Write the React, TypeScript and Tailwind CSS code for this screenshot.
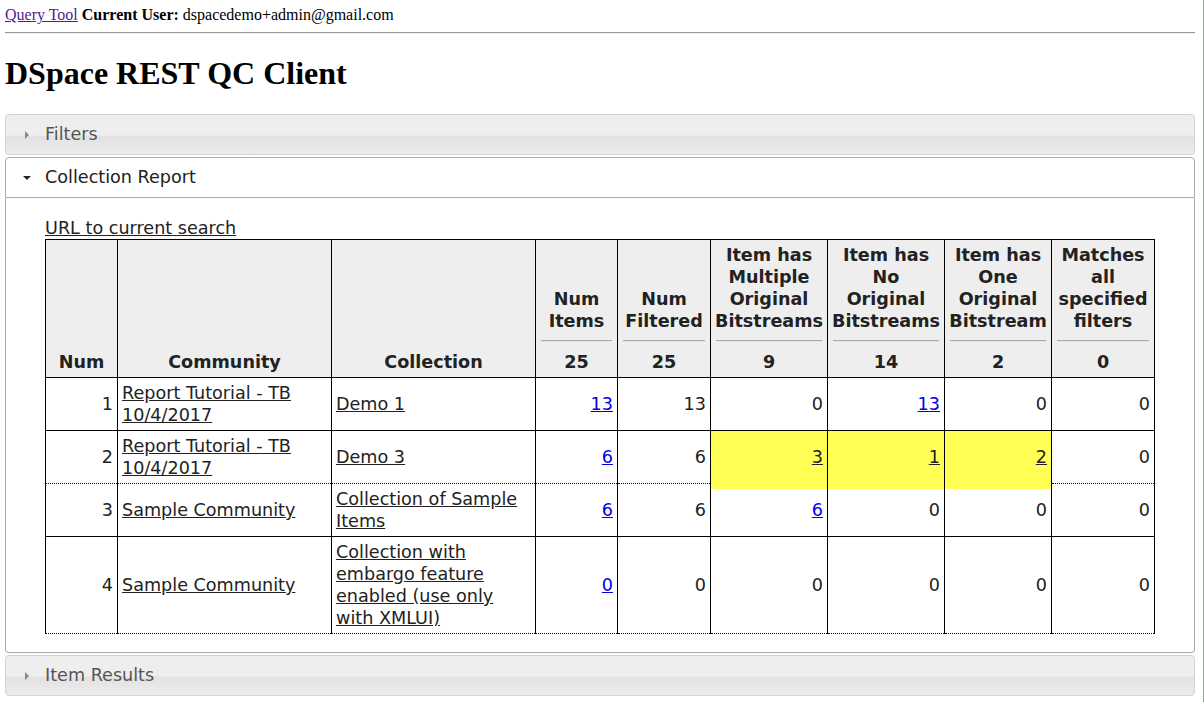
import React from "react";

const ui = { fontFamily: '"DejaVu Sans", Verdana, sans-serif' };

function TriRight() {
  return (
    <svg width="16" height="16" viewBox="0 0 16 16" className="shrink-0">
      <path d="M6 4 L10 8 L6 12 Z" fill="#888888" />
    </svg>
  );
}

function TriDown() {
  return (
    <svg width="16" height="16" viewBox="0 0 16 16" className="shrink-0">
      <path d="M4 6 L12 6 L8 10 Z" fill="#222222" />
    </svg>
  );
}

function ClosedHeader({ label }: { label: string }) {
  return (
    <div className="mt-[2px] flex items-center rounded-[4px] border border-[#d3d3d3] bg-[linear-gradient(to_bottom,#eeeeee_0%,#eeeeee_50%,#e2e2e2_56%,#ececec_100%)] py-[8px] pl-[13px] text-[17.6px] leading-[23px] text-[#555555]">
      <TriRight />
      <span className="ml-[10px]">{label}</span>
    </div>
  );
}

const blue = "text-[#0000ee] underline";
const dark = "text-[#222222] underline";

type Cell = { v: string; link?: boolean; hi?: boolean };

const rows: { num: number; comm: string; coll: string; cells: Cell[]; dotted?: boolean }[] = [
  {
    num: 1,
    comm: "Report Tutorial - TB 10/4/2017",
    coll: "Demo 1",
    cells: [{ v: "13", link: true }, { v: "13" }, { v: "0" }, { v: "13", link: true }, { v: "0" }, { v: "0" }],
  },
  {
    num: 2,
    comm: "Report Tutorial - TB 10/4/2017",
    coll: "Demo 3",
    dotted: true,
    cells: [
      { v: "6", link: true },
      { v: "6" },
      { v: "3", link: true, hi: true },
      { v: "1", link: true, hi: true },
      { v: "2", link: true, hi: true },
      { v: "0" },
    ],
  },
  {
    num: 3,
    comm: "Sample Community",
    coll: "Collection of Sample Items",
    cells: [{ v: "6", link: true }, { v: "6" }, { v: "6", link: true }, { v: "0" }, { v: "0" }, { v: "0" }],
  },
  {
    num: 4,
    comm: "Sample Community",
    coll: "Collection with embargo feature enabled (use only with XMLUI)",
    dotted: true,
    cells: [{ v: "0", link: true }, { v: "0" }, { v: "0" }, { v: "0" }, { v: "0" }, { v: "0" }],
  },
];

const countCols: { label: string[]; total: string }[] = [
  { label: ["Num", "Items"], total: "25" },
  { label: ["Num", "Filtered"], total: "25" },
  { label: ["Item has", "Multiple", "Original", "Bitstreams"], total: "9" },
  { label: ["Item has", "No", "Original", "Bitstreams"], total: "14" },
  { label: ["Item has", "One", "Original", "Bitstream"], total: "2" },
  { label: ["Matches", "all", "specified", "filters"], total: "0" },
];

const th = "border border-black bg-[#eeeeee] px-[4px] pt-[4px] pb-[4px] align-bottom font-bold text-center";
const td = "border-x border-black px-[4px] py-[4px] align-middle";

export default function App() {
  return (
    <div className="flex h-[702px] w-[1204px] overflow-hidden border-r border-[#9ea1a8] bg-white">
      <div className="flex-1 pl-[5px] pr-[9px] pt-[6px]">
        <div className="text-[16px] leading-[18px] text-black" style={{ fontFamily: '"Liberation Serif", "Times New Roman", serif' }}>
          <a className="text-[#551a8b] underline">Query Tool</a> <b>Current User:</b> dspacedemo+admin@gmail.com
          <div className="mt-[8px] border-t border-b border-t-[#9a9a9a] border-b-[#eeeeee]" />
          <h1 className="mt-[21px] mb-[22px] text-[32px] font-bold leading-[37px]">DSpace REST QC Client</h1>
        </div>

        <div style={ui}>
          <ClosedHeader label="Filters" />

          <div className="mt-[2px] flex items-center rounded-t-[4px] border border-[#aaaaaa] bg-white py-[8px] pl-[13px] text-[17.6px] leading-[23px] text-[#212121]">
            <TriDown />
            <span className="ml-[10px]">Collection Report</span>
          </div>
          <div className="rounded-b-[4px] border border-t-0 border-[#aaaaaa] bg-white px-[39px] pt-[19px] pb-[18px] text-[17.6px] leading-[22px] text-[#222222]">
            <a className={dark}>URL to current search</a>
            <table className="w-full table-fixed border-collapse">
              <colgroup>
                <col className="w-[72px]" />
                <col className="w-[214px]" />
                <col className="w-[204px]" />
                <col className="w-[82px]" />
                <col className="w-[93px]" />
                <col className="w-[117px]" />
                <col className="w-[117px]" />
                <col className="w-[107px]" />
                <col className="w-[103px]" />
              </colgroup>
              <thead>
                <tr>
                  <th className={th}>Num</th>
                  <th className={th}>Community</th>
                  <th className={th}>Collection</th>
                  {countCols.map((c, i) => (
                    <th key={i} className={`${th} px-[3px] whitespace-nowrap`}>
                      {c.label.map((l, j) => (
                        <div key={j}>{l}</div>
                      ))}
                      <div className="mx-[1px] mt-[8px] mb-[9px] border-t border-b border-t-[#a8a8a8] border-b-[#e4e4e4]" />
                      <div>{c.total}</div>
                    </th>
                  ))}
                </tr>
              </thead>
              <tbody>
                {rows.map((r) => (
                  <tr
                    key={r.num}
                    className={r.dotted ? "border-b border-dotted border-black" : "border-b border-solid border-black"}
                  >
                    <td className={`${td} text-right`}>{r.num}</td>
                    <td className={td}>
                      <a className={dark}>{r.comm}</a>
                    </td>
                    <td className={td}>
                      <a className={dark}>{r.coll}</a>
                    </td>
                    {r.cells.map((c, i) => (
                      <td key={i} className={`${td} relative text-right ${c.hi ? "bg-[#ffff55]" : ""}`}>
                        {c.hi && <span className="absolute left-0 right-0 -bottom-[6px] h-[6px] bg-[#ffff55]" />}
                        {c.link ? <a className={c.hi ? dark : blue}>{c.v}</a> : c.v}
                      </td>
                    ))}
                  </tr>
                ))}
              </tbody>
            </table>
          </div>

          <ClosedHeader label="Item Results" />
        </div>
      </div>
    </div>
  );
}
